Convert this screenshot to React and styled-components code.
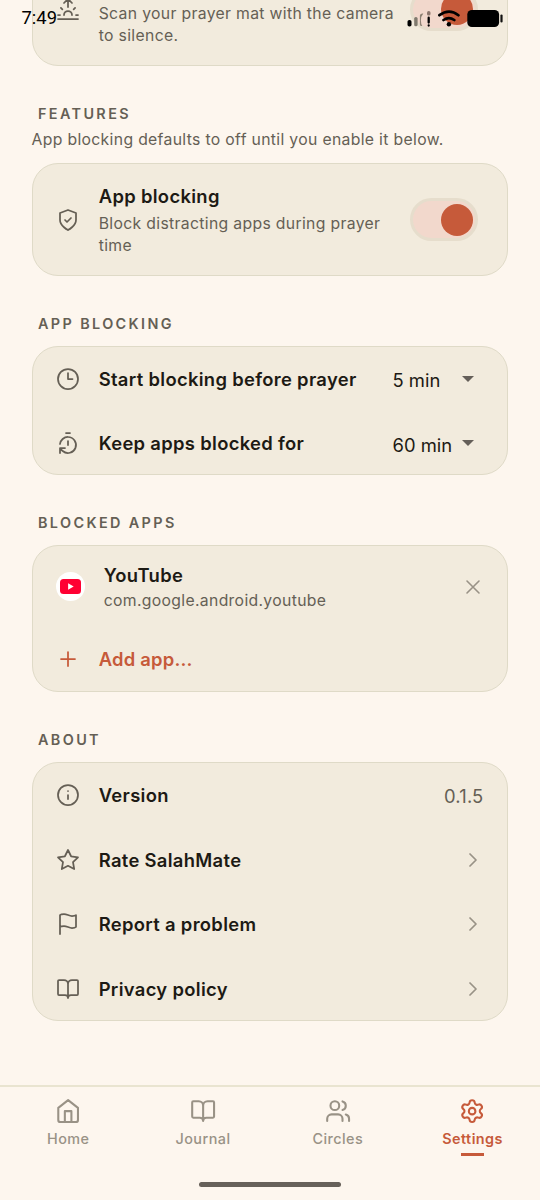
import React from "react";
import styled, { createGlobalStyle } from "styled-components";

const GlobalStyle = createGlobalStyle`
  * { box-sizing: border-box; }
  body { margin: 0; background: #fdf6ee; }
`;

const color = {
  page: "#fdf6ee",
  card: "#f2ebdd",
  line: "#dfdac7",
  ink: "#1d1a14",
  soft: "#655f55",
  faint: "#999286",
  accent: "#c65a3a",
};

const Screen = styled.div`
  position: relative;
  width: 540px;
  height: 1200px;
  overflow: hidden;
  display: flex;
  flex-direction: column;
  background: ${color.page};
  color: ${color.ink};
  font-family: Inter, "Liberation Sans", sans-serif;
`;

const Content = styled.main`
  flex: 1;
  min-height: 0;
  overflow: hidden;
  padding: 0 32px 0 31.5px;
  display: flex;
  flex-direction: column;
`;

const Card = styled.section`
  flex: none;
  height: ${(p) => p.$height}px;
  margin-top: ${(p) => p.$top || 0}px;
  border: 1.3px solid ${color.line};
  border-radius: 26px;
  background: ${color.card};
  padding: 0 23.5px;
  display: flex;
  flex-direction: column;
`;

const Row = styled.div`
  flex: ${(p) => (p.$height ? "none" : 1)};
  height: ${(p) => (p.$height ? p.$height + "px" : "auto")};
  display: flex;
  align-items: center;
`;

const Icon = styled.svg`
  flex: none;
  display: block;
  width: ${(p) => p.$size || 24}px;
  height: ${(p) => p.$size || 24}px;
  fill: none;
  stroke: ${(p) => p.$color || color.soft};
  stroke-width: ${(p) => p.$stroke || 1.75};
  stroke-linecap: round;
  stroke-linejoin: round;
`;

const Trailing = styled.span`
  flex: none;
  margin-right: -1.5px;
`;

const Copy = styled.div`
  flex: 1;
  min-width: 0;
  margin-left: 18.7px;
  padding-top: ${(p) => p.$offset || 0}px;
  display: flex;
  flex-direction: column;
  gap: ${(p) => p.$gap || 0}px;
`;

const Title = styled.div`
  font-size: 18.4px;
  line-height: 26px;
  font-weight: 600;
  letter-spacing: ${(p) => (p.$accent ? 0.22 : 0.32)}px;
  white-space: nowrap;
  color: ${(p) => (p.$accent ? color.accent : color.ink)};
`;

const Detail = styled.div`
  font-size: 15.75px;
  line-height: 22px;
  letter-spacing: 0.33px;
  color: ${color.soft};
  white-space: nowrap;
`;

const SectionLabel = styled.h2`
  flex: none;
  margin: ${(p) => p.$top}px 0 0 6.5px;
  font-size: 14.4px;
  line-height: 20px;
  font-weight: 600;
  letter-spacing: 2.38px;
  color: ${color.soft};
`;

const Note = styled.p`
  flex: none;
  margin: 4.5px 0 0;
  font-size: 15.75px;
  line-height: 22px;
  letter-spacing: 0.33px;
  color: ${color.soft};
`;

const Track = styled.div`
  flex: none;
  width: 68px;
  height: 43px;
  margin-right: 5.5px;
  padding: 0 2px;
  border: 3px solid #e6ddcc;
  border-radius: 22px;
  background: #f2d8cc;
  display: flex;
  align-items: center;
  justify-content: flex-end;
`;

const Knob = styled.div`
  width: 32px;
  height: 32px;
  border-radius: 50%;
  background: ${color.accent};
`;

const Select = styled.div`
  flex: none;
  width: 91px;
  height: 32px;
  display: flex;
  align-items: center;
  justify-content: space-between;
  padding-right: 10px;
`;

const Value = styled.span`
  font-size: 18.4px;
  line-height: 26px;
  padding-top: ${(p) => p.$drop || 0}px;
  color: ${(p) => (p.$soft ? color.soft : color.ink)};
  letter-spacing: ${(p) => p.$spacing || 0}px;
`;

const Caret = styled.span`
  width: 0;
  height: 0;
  border: 6.5px solid transparent;
  border-top-color: #655f59;
  border-bottom: 0;
`;

const AppBadge = styled.span`
  flex: none;
  width: 29px;
  height: 29px;
  border-radius: 50%;
  background: #fff;
  display: flex;
  align-items: center;
  justify-content: center;
`;

const Nav = styled.nav`
  flex: none;
  height: 115.5px;
  border-top: 2px solid #e9e4d0;
  display: grid;
  grid-template-columns: repeat(4, 1fr);
  align-items: start;
  padding: 11px 0 0 0.8px;
`;

const Tab = styled.div`
  display: flex;
  flex-direction: column;
  align-items: center;
  color: ${(p) => (p.$active ? color.accent : color.faint)};
  font-size: 14.4px;
  line-height: 20px;
  font-weight: ${(p) => (p.$active ? 600 : 500)};
  letter-spacing: 0.45px;

  span { margin-top: 5px; }
`;

const Underline = styled.i`
  width: 23px;
  height: 2.6px;
  margin-top: 4.6px;
  background: ${color.accent};
`;

const HomeIndicator = styled.div`
  position: absolute;
  left: 199px;
  bottom: 13px;
  width: 142px;
  height: 5px;
  border-radius: 3px;
  background: #67615a;
`;

const StatusBar = styled.header`
  position: absolute;
  inset: 0 0 auto 0;
  height: 36px;
  padding: 0 37px 0 21.5px;
  display: flex;
  align-items: center;
  justify-content: space-between;
  color: #000;
`;

const Clock = styled.span`
  font: 400 18.4px/22px Roboto, sans-serif;
`;

const paths = {
  sunrise: <path d="M12 2v8M8 6l4-4 4 4M4.93 10.93l1.41 1.41M2 18h2M20 18h2M19.07 10.93l-1.41 1.41M22 22H2M16 18a4 4 0 0 0-8 0" />,
  shield: <path d="M12 22s8-4 8-10V5l-8-3-8 3v7c0 6 8 10 8 10M9 12l2 2 4-4" />,
  clock: <><circle cx="12" cy="12" r="10" /><path d="M12 6v6h4.5" /></>,
  reset: <path d="M10 2h4M12 14v-4M4 13a8 8 0 0 1 8-7 8 8 0 1 1-5.3 14L4 17.6M9 17H4v5" />,
  plus: <path d="M5 12h14M12 5v14" />,
  close: <path d="M18 6 6 18M6 6l12 12" />,
  chevron: <path d="m9 18 6-6-6-6" />,
  info: <><circle cx="12" cy="12" r="10" /><path d="M12 16v-4M12 8h.01" /></>,
  star: <path d="m12 2 3.09 6.26L22 9.27l-5 4.87 1.18 6.88L12 17.77l-6.18 3.25L7 14.14 2 9.27l6.91-1.01z" />,
  flag: <path d="M4 15s1-1 4-1 5 2 8 2 4-1 4-1V3s-1 1-4 1-5-2-8-2-4 1-4 1zM4 22v-7" />,
  book: <path d="M12 7v14M3 18a1 1 0 0 1-1-1V4a1 1 0 0 1 1-1h5a4 4 0 0 1 4 4 4 4 0 0 1 4-4h5a1 1 0 0 1 1 1v13a1 1 0 0 1-1 1h-6a3 3 0 0 0-3 3 3 3 0 0 0-3-3z" />,
  home: <path d="m3 9 9-7 9 7v11a2 2 0 0 1-2 2H5a2 2 0 0 1-2-2zM9 22V12h6v10" />,
  users: <><circle cx="9" cy="7" r="4" /><path d="M16 21v-2a4 4 0 0 0-4-4H6a4 4 0 0 0-4 4v2M22 21v-2a4 4 0 0 0-3-3.87M16 3.13a4 4 0 0 1 0 7.75" /></>,
  gear: <><path d="M9.671 4.136a2.34 2.34 0 0 1 4.659 0 2.34 2.34 0 0 0 3.319 1.915 2.34 2.34 0 0 1 2.33 4.033 2.34 2.34 0 0 0 0 3.831 2.34 2.34 0 0 1-2.33 4.033 2.34 2.34 0 0 0-3.319 1.915 2.34 2.34 0 0 1-4.659 0 2.34 2.34 0 0 0-3.32-1.915 2.34 2.34 0 0 1-2.33-4.033 2.34 2.34 0 0 0 0-3.831A2.34 2.34 0 0 1 6.35 6.051a2.34 2.34 0 0 0 3.319-1.915" /><circle cx="12" cy="12" r="3" /></>,
};

const Glyph = ({ name, size, tint, stroke }) => (
  <Icon viewBox="0 0 24 24" $size={size} $color={tint} $stroke={stroke}>{paths[name]}</Icon>
);

const Toggle = () => <Track><Knob /></Track>;

const SelectRow = ({ icon, title, value, height }) => (
  <Row $height={height}>
    <Glyph name={icon} />
    <Copy><Title>{title}</Title></Copy>
    <Select><Value $drop={3}>{value}</Value><Caret /></Select>
  </Row>
);

const LinkRow = ({ icon, title, height }) => (
  <Row $height={height}>
    <Glyph name={icon} />
    <Copy><Title>{title}</Title></Copy>
    <Trailing><Glyph name="chevron" tint={color.faint} /></Trailing>
  </Row>
);

const NavTab = ({ icon, label, active }) => (
  <Tab $active={active}>
    <Glyph name={icon} size={26.25} stroke={1.9} tint={active ? color.accent : color.faint} />
    <span>{label}</span>
    {active && <Underline />}
  </Tab>
);

const StatusIcons = () => (
  <svg width="96" height="20" viewBox="407 8 96 20">
    <rect x="407.5" y="20" width="4" height="6.5" rx="1.8" fill="#000" />
    <rect x="414.2" y="17" width="3.4" height="9.3" rx="1.6" fill="#807a6e" />
    <path d="M423.3 13.6q-2.6 3-2.4 7 0 3.6 1.4 5.4-2.4.3-2.4-1.6V15.2q.4-1.9 3.4-1.6z" fill="#8c8072" />
    <rect x="427" y="11" width="3.5" height="4.6" rx="1.7" fill="#8c766d" />
    <path d="M428.7 17.7v4.8M428.7 25.4v.2" stroke="#000" strokeWidth="2.3" strokeLinecap="round" />
    <path d="M439.4 15.2q9.8-7.2 19 0M443.5 20q5.3-3.8 10.8 0" fill="none" stroke="#000" strokeWidth="2.7" strokeLinecap="round" />
    <circle cx="448.9" cy="24.3" r="2.2" fill="#000" />
    <rect x="467.3" y="10" width="31.8" height="17" rx="4.6" fill="#000" />
    <rect x="500.4" y="14.5" width="2.2" height="8" rx="1.1" fill="#111" />
  </svg>
);

export default function App() {
  return (
    <Screen>
      <GlobalStyle />
      <Content>
        <Card $height={112} $top={-46}>
          <Row $height={108.6}>
            <Glyph name="sunrise" />
            <Copy $offset={31}>
              <Detail>Scan your prayer mat with the camera<br />to silence.</Detail>
            </Copy>
            <Toggle />
          </Row>
        </Card>

        <SectionLabel $top={38}>FEATURES</SectionLabel>
        <Note>App blocking defaults to off until you enable it below.</Note>
        <Card $height={113} $top={12.5}>
          <Row>
            <Glyph name="shield" />
            <Copy $gap={4}>
              <Title>App blocking</Title>
              <Detail>Block distracting apps during prayer<br />time</Detail>
            </Copy>
            <Toggle />
          </Row>
        </Card>

        <SectionLabel $top={37.7}>APP BLOCKING</SectionLabel>
        <Card $height={129.4} $top={12}>
          <SelectRow icon="clock" title="Start blocking before prayer" value="5 min" height={64} />
          <SelectRow icon="reset" title="Keep apps blocked for" value="60 min" height={65} />
        </Card>

        <SectionLabel $top={37.5}>BLOCKED APPS</SectionLabel>
        <Card $height={147} $top={12.4}>
          <Row $height={82}>
            <AppBadge>
              <svg width="21" height="15" viewBox="0 0 21 15">
                <rect width="21" height="15" rx="3.5" fill="#ff0033" />
                <path d="M8.1 4.3v6.4l5.6-3.2z" fill="#fff" />
              </svg>
            </AppBadge>
            <Copy $gap={2}>
              <Title>YouTube</Title>
              <Detail>com.google.android.youtube</Detail>
            </Copy>
            <Trailing><Glyph name="close" tint={color.faint} stroke={1.6} /></Trailing>
          </Row>
          <Row>
            <Glyph name="plus" tint={color.accent} />
            <Copy><Title $accent>Add app...</Title></Copy>
          </Row>
        </Card>

        <SectionLabel $top={38}>ABOUT</SectionLabel>
        <Card $height={259.6} $top={11.9}>
          <Row $height={64.6}>
            <Glyph name="info" />
            <Copy><Title>Version</Title></Copy>
            <Value $soft $drop={1} $spacing={0.2}>0.1.5</Value>
          </Row>
          <LinkRow icon="star" title="Rate SalahMate" height={64.6} />
          <LinkRow icon="flag" title="Report a problem" height={64.6} />
          <LinkRow icon="book" title="Privacy policy" height={64.6} />
        </Card>
      </Content>

      <Nav>
        <NavTab icon="home" label="Home" />
        <NavTab icon="book" label="Journal" />
        <NavTab icon="users" label="Circles" />
        <NavTab icon="gear" label="Settings" active />
      </Nav>
      <HomeIndicator />
      <StatusBar>
        <Clock>7:49</Clock>
        <StatusIcons />
      </StatusBar>
    </Screen>
  );
}
